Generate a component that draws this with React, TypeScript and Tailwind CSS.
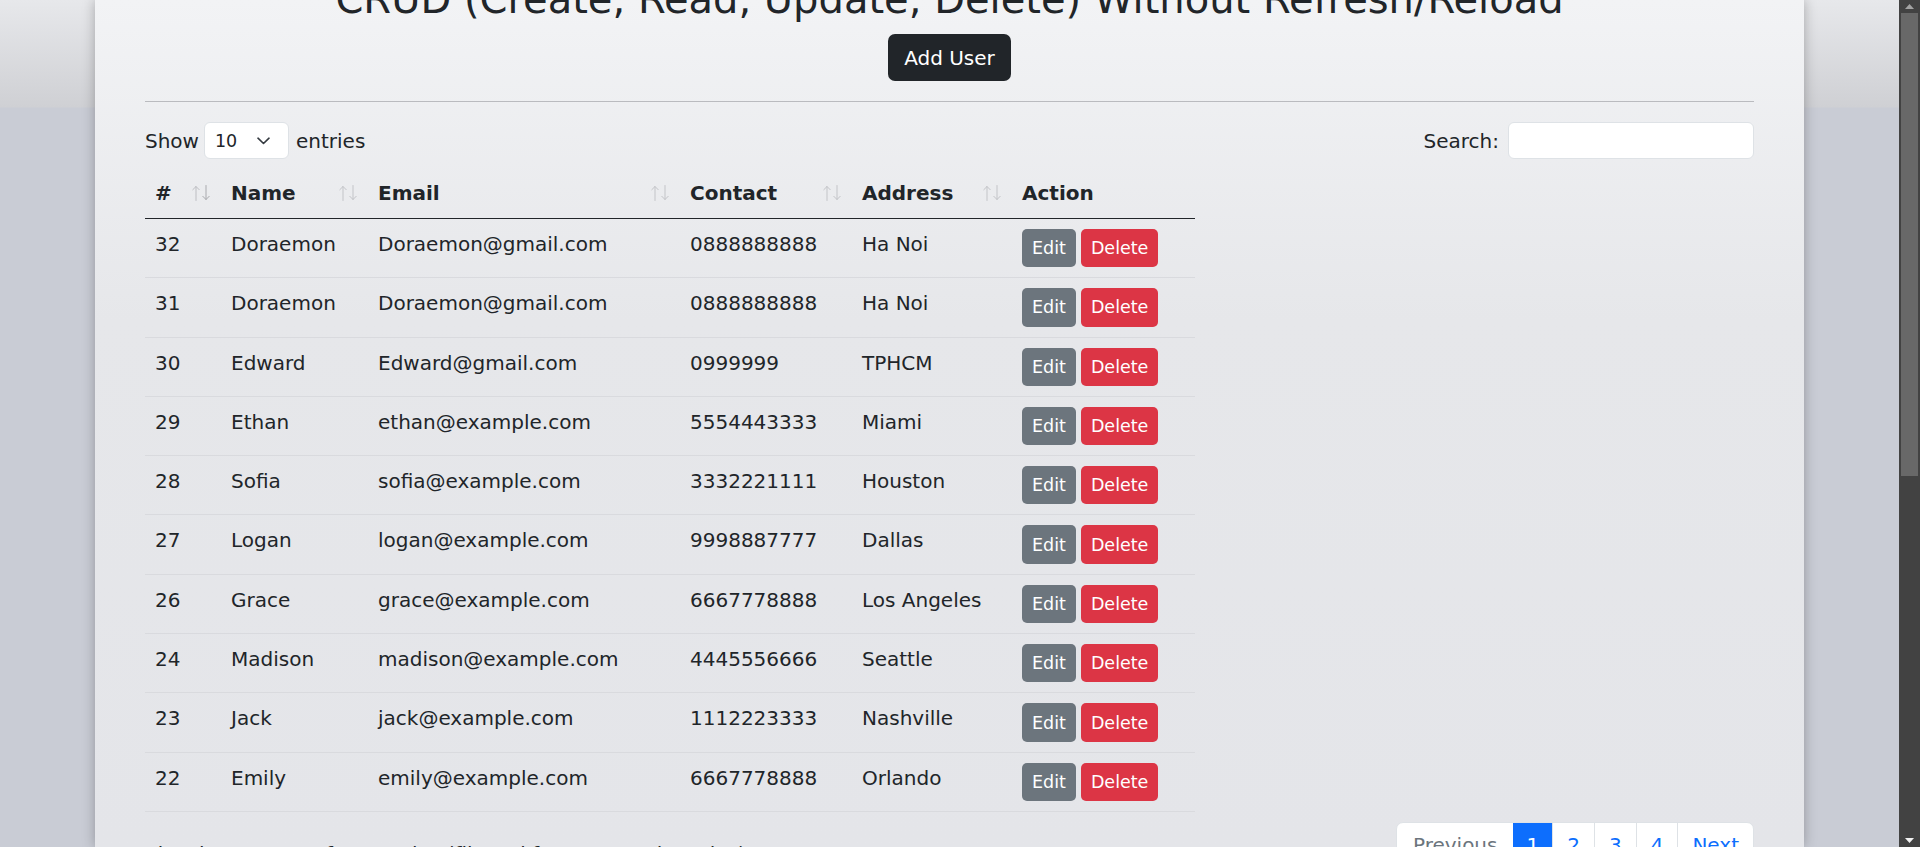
import React from "react";

type User = {
  id: number;
  name: string;
  email: string;
  contact: string;
  address: string;
};

const users: User[] = [
  { id: 32, name: "Doraemon", email: "Doraemon@gmail.com", contact: "0888888888", address: "Ha Noi" },
  { id: 31, name: "Doraemon", email: "Doraemon@gmail.com", contact: "0888888888", address: "Ha Noi" },
  { id: 30, name: "Edward", email: "Edward@gmail.com", contact: "0999999", address: "TPHCM" },
  { id: 29, name: "Ethan", email: "ethan@example.com", contact: "5554443333", address: "Miami" },
  { id: 28, name: "Sofia", email: "sofia@example.com", contact: "3332221111", address: "Houston" },
  { id: 27, name: "Logan", email: "logan@example.com", contact: "9998887777", address: "Dallas" },
  { id: 26, name: "Grace", email: "grace@example.com", contact: "6667778888", address: "Los Angeles" },
  { id: 24, name: "Madison", email: "madison@example.com", contact: "4445556666", address: "Seattle" },
  { id: 23, name: "Jack", email: "jack@example.com", contact: "1112223333", address: "Nashville" },
  { id: 22, name: "Emily", email: "emily@example.com", contact: "6667778888", address: "Orlando" },
];

const SortIcon = ({ active = false }: { active?: boolean }) => (
  <svg width="20" height="18" viewBox="0 0 20 18" className="shrink-0">
    <g fill="none" strokeWidth="1" strokeLinecap="round" strokeLinejoin="round">
      <g stroke={active ? "#bdbec2" : "#c3c4c8"}>
        <path d="M5 2.5v14" />
        <path d="M1.8 5.7 5 2.5l3.2 3.2" />
      </g>
      <g stroke={active ? "#a9aaae" : "#c3c4c8"}>
        <path d="M15 1.5v14" />
        <path d="M11.8 12.3 15 15.5l3.2-3.2" />
      </g>
    </g>
  </svg>
);

const Th = ({ label, w, sort = true, active = false }: { label: string; w: string; sort?: boolean; active?: boolean }) => (
  <th className={`${w} border-b border-[#212529] px-[10px] py-[10px] text-left align-top font-bold`}>
    <div className="flex h-[30px] items-center justify-between">
      <span>{label}</span>
      {sort && <SortIcon active={active} />}
    </div>
  </th>
);

const Scrollbar = () => (
  <div className="flex h-full w-[21px] shrink-0 flex-col bg-[#424242]">
    <div className="flex h-[13px] items-center justify-center">
      <svg width="9" height="5" viewBox="0 0 9 5">
        <path d="M0 5 4.5 0 9 5z" fill="#a3a3a3" />
      </svg>
    </div>
    <div className="mx-[2px] h-[463px] bg-[#686868]" />
    <div className="flex-1" />
    <div className="flex h-[14px] items-center justify-center">
      <svg width="9" height="5" viewBox="0 0 9 5">
        <path d="M0 0h9L4.5 5z" fill="#f2f2f2" />
      </svg>
    </div>
  </div>
);

export default function App() {
  return (
    <div className="flex h-[847px] w-full overflow-hidden font-['DejaVu_Sans',sans-serif] text-[20px] leading-[30px] text-[#212529]">
      <div className="flex flex-1 justify-center bg-[linear-gradient(to_bottom,#e7e8eb_0px,#cfd0d4_107px,#c9ccd5_108px,#c9ccd5_100%)]">
        <div className="h-full w-[1709px] bg-[linear-gradient(to_bottom,#f2f3f5_0px,#e6e7ea_320px,#e4e5e9_100%)] px-[50px] shadow-[0_0_12px_rgba(0,0,0,0.28)]">
          <h1 className="mt-[-25px] h-[48px] text-center text-[40px] font-normal leading-[48px]">
            CRUD (Create, Read, Update, Delete) Without Refresh/Reload
          </h1>
          <div className="mt-[11px] flex justify-center">
            <button className="h-[47px] rounded-[7px] bg-[#212529] px-[16px] text-[20px] text-white">
              Add User
            </button>
          </div>
          <hr className="mt-[20px] border-0 border-t border-[#babbbf]" />

          <div className="mt-[20px] flex h-[37px] items-center justify-between">
            <div className="flex items-center">
              <span>Show</span>
              <div className="ml-[5px] mr-[7px] flex h-[37px] w-[85px] items-center justify-between rounded-[6px] border border-[#dee2e6] bg-white pl-[10px] pr-[18px] text-[17.5px]">
                <span>10</span>
                <svg width="13" height="8" viewBox="0 0 13 8">
                  <path d="M1 1.2 6.5 6.5 12 1.2" fill="none" stroke="#343a40" strokeWidth="1.6" strokeLinecap="round" strokeLinejoin="round" />
                </svg>
              </div>
              <span>entries</span>
            </div>
            <div className="flex items-center">
              <span>Search:</span>
              <input className="ml-[9px] h-[37px] w-[246px] rounded-[6px] border border-[#dee2e6] bg-white px-[10px] outline-none" />
            </div>
          </div>

          <table className="mt-[9px] w-[1050px] table-fixed border-collapse">
            <thead>
              <tr>
                <Th label="#" w="w-[76px]" active />
                <Th label="Name" w="w-[147px]" />
                <Th label="Email" w="w-[312px]" />
                <Th label="Contact" w="w-[172px]" />
                <Th label="Address" w="w-[160px]" />
                <Th label="Action" w="w-[183px]" sort={false} />
              </tr>
            </thead>
            <tbody>
              {users.map((u) => (
                <tr key={u.id} className="border-b border-[#d9dade]">
                  <td className="px-[10px] pt-[10px] pb-[10px] align-top">{u.id}</td>
                  <td className="px-[10px] pt-[10px] pb-[10px] align-top">{u.name}</td>
                  <td className="px-[10px] pt-[10px] pb-[10px] align-top">{u.email}</td>
                  <td className="px-[10px] pt-[10px] pb-[10px] align-top">{u.contact}</td>
                  <td className="px-[10px] pt-[10px] pb-[10px] align-top">{u.address}</td>
                  <td className="px-[10px] pt-[10px] pb-[10px] align-top">
                    <div className="flex gap-[5px]">
                      <button className="h-[38.3px] rounded-[5px] bg-[#6c757d] px-[10px] text-[17.5px] leading-[26px] text-white">
                        Edit
                      </button>
                      <button className="h-[38.3px] rounded-[5px] bg-[#dc3545] px-[10px] text-[17.5px] leading-[26px] text-white">
                        Delete
                      </button>
                    </div>
                  </td>
                </tr>
              ))}
            </tbody>
          </table>

          <div className="mt-[10px] flex items-start justify-between">
            <div className="pt-[17px]">
              Showing 1 to 10 of 31 entries (filtered from 19 total entries)
            </div>
            <ul className="flex overflow-hidden rounded-[7px] border border-[#dee2e6] bg-white">
              <li className="px-[16px] py-[7.5px] text-[#6c757d]">Previous</li>
              <li className="bg-[#0d6efd] px-[13px] py-[7.5px] text-white">1</li>
              <li className="border-l border-[#dee2e6] px-[14px] py-[7.5px] text-[#0d6efd]">2</li>
              <li className="border-l border-[#dee2e6] px-[14px] py-[7.5px] text-[#0d6efd]">3</li>
              <li className="border-l border-[#dee2e6] px-[14px] py-[7.5px] text-[#0d6efd]">4</li>
              <li className="border-l border-[#dee2e6] px-[14px] py-[7.5px] text-[#0d6efd]">Next</li>
            </ul>
          </div>
        </div>
      </div>
      <Scrollbar />
    </div>
  );
}
